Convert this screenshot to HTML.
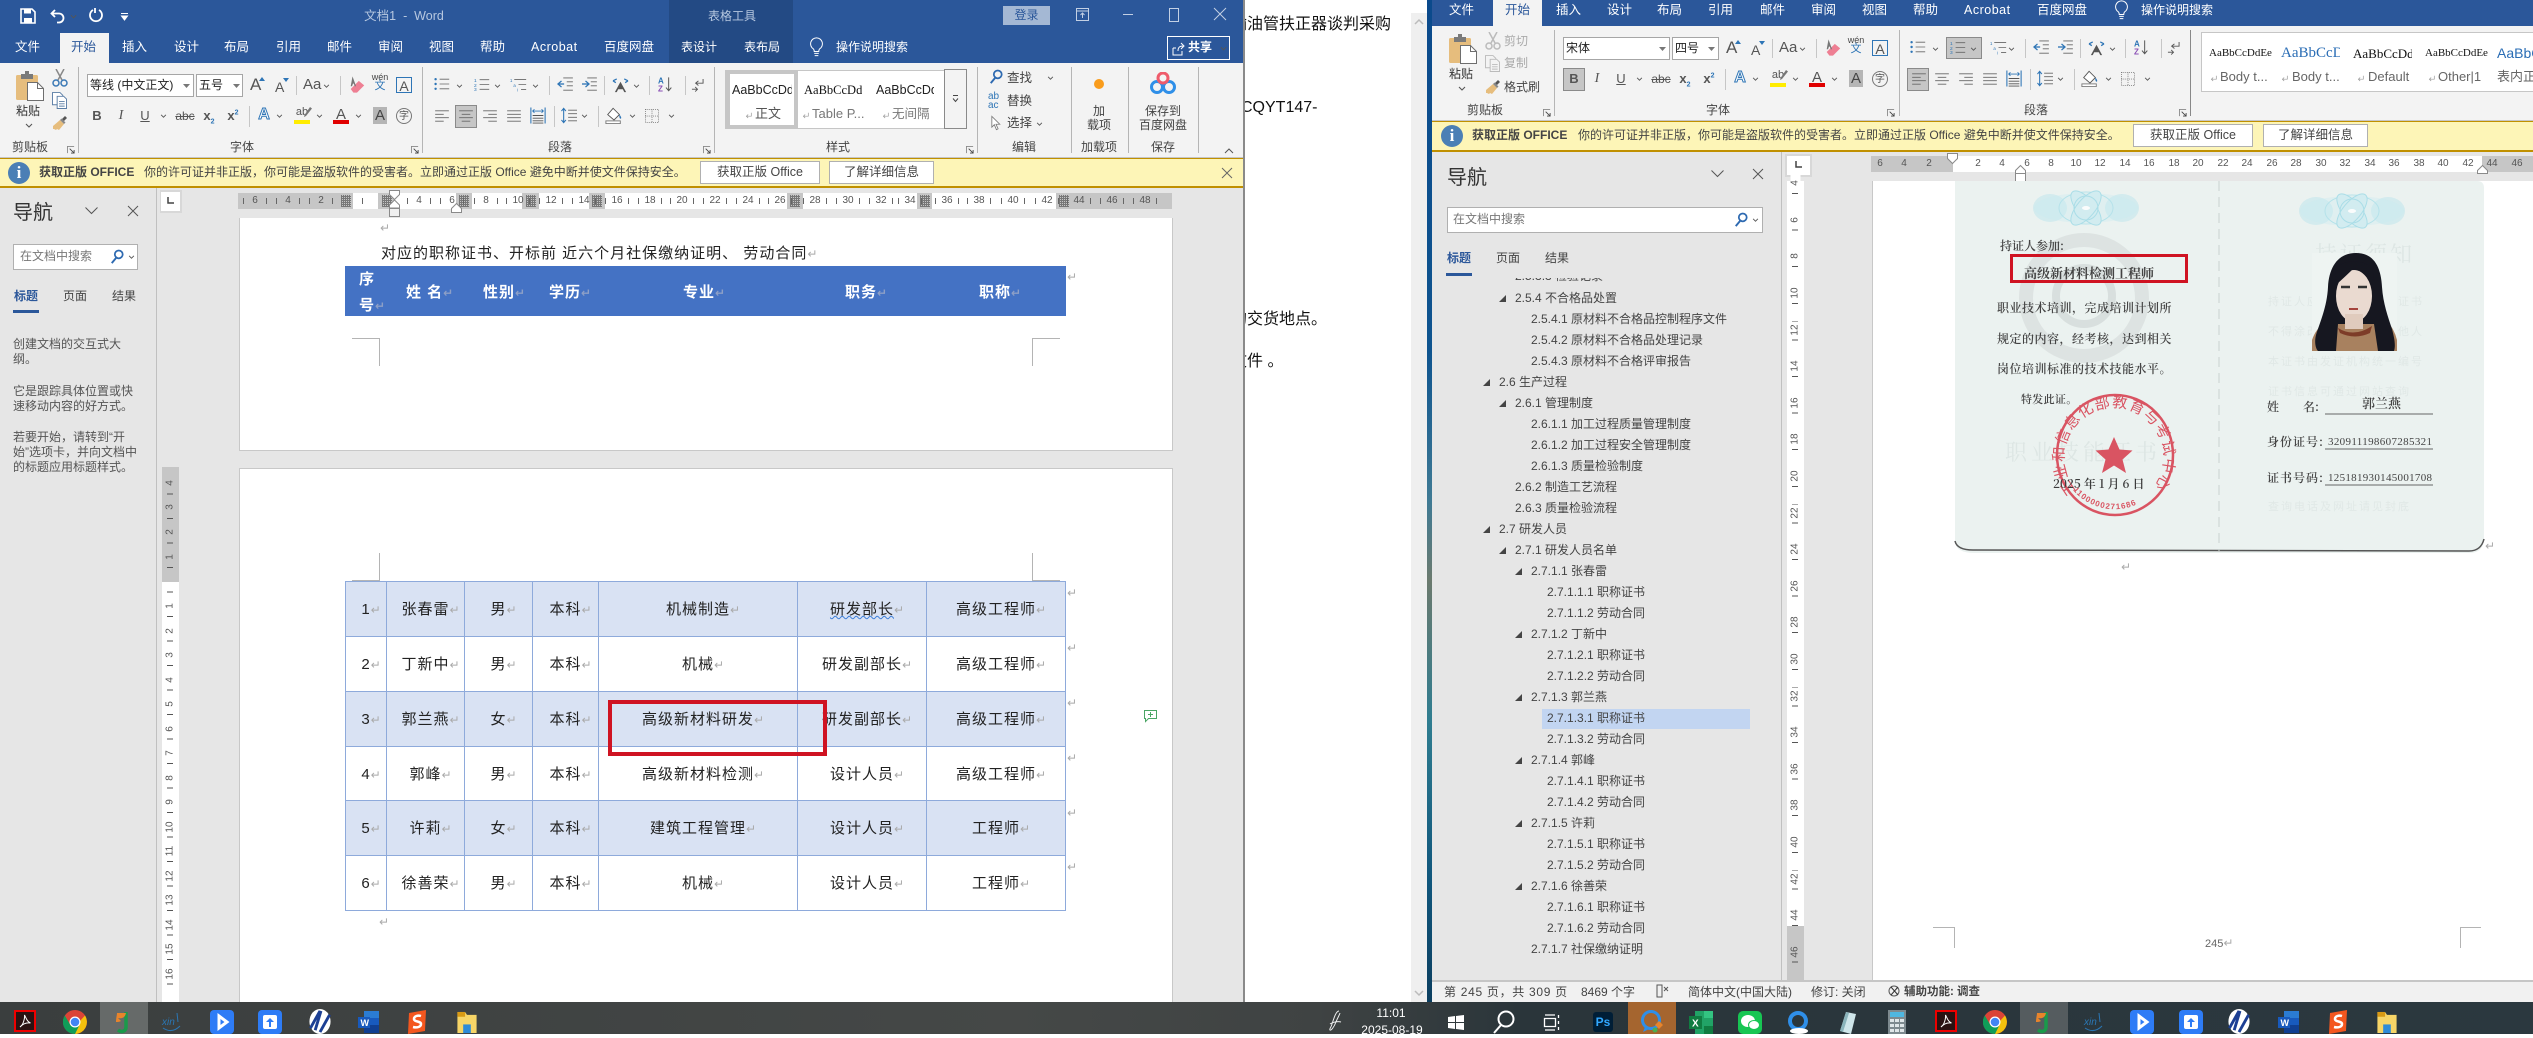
<!DOCTYPE html>
<html lang="zh"><head><meta charset="utf-8"><title>Word</title>
<style>
html,body{margin:0;padding:0}
body{position:relative;width:2533px;height:1034px;overflow:hidden;background:#fff;font-family:"Liberation Sans","Noto Sans CJK SC",sans-serif;font-size:12px;color:#444}
.a,.t,.u,.g,.tb,.bx{position:absolute}
.t{white-space:nowrap;line-height:16px}
.c{transform:translateX(-50%)}
.tb{color:#fff;white-space:nowrap;line-height:16px;font-size:12.5px}
.u{overflow:visible;display:block}
.lbl{color:#444;font-size:12px}
.sep{position:absolute;width:1px;background:#c6c6c6}
.sep2{position:absolute;width:1px;background:#b5b5b5;top:67px;height:86px}
.inp{position:absolute;background:#fff;border:1px solid #a6a6a6;box-sizing:border-box;color:#222;line-height:21px;padding-left:2px;font-size:12px}
.y{position:absolute;background:#fdf5b7;border-top:1px solid #c09000;border-bottom:2px solid #c09000;box-sizing:border-box}
.yb{position:absolute;background:#fff;border:1px solid #b0b0b0;box-sizing:border-box;color:#444;text-align:center;line-height:20px;font-size:12.5px}
.tri{position:absolute;width:0;height:0;border-style:solid;border-width:0 0 7px 7px;border-color:transparent transparent #444}
.rn{position:absolute;top:193px;width:24px;height:16px;line-height:16px;text-align:center;font-size:10px;color:#555;margin-left:-12px;background:linear-gradient(#666,#666) 0 50%/1px 6px no-repeat,linear-gradient(#666,#666) 100% 50%/1px 6px no-repeat}
.rr{position:absolute;top:156px;width:20px;height:16px;line-height:16px;text-align:center;font-size:10px;color:#555;margin-left:-10px}
.hatch{position:absolute;top:193px;height:16px;background:#c6c6c6}
.hatch:after{content:"";position:absolute;left:50%;top:2px;width:10px;height:12px;margin-left:-5px;background:repeating-linear-gradient(90deg,#777 0 1px,transparent 1px 2px),repeating-linear-gradient(0deg,#777 0 1px,transparent 1px 2px)}
.vn{position:absolute;width:17px;height:12px;line-height:12px;text-align:center;font-size:10px;color:#555;transform:rotate(-90deg)}
.mk{font-style:normal;color:#aaa;font-size:12px;font-family:"DejaVu Sans",sans-serif}
table.m{position:absolute;left:345px;top:581px;border-collapse:collapse;table-layout:fixed;width:720px;font-size:15px;letter-spacing:1px;color:#222}
table.m td{border:1px solid #8eaadb;text-align:center;padding:2px 0 0;white-space:nowrap;line-height:18px;overflow:hidden;box-sizing:border-box}
table.m tr.o td{background:#d9e2f3}
table.m .mk{display:inline-block;width:0;overflow:visible;letter-spacing:0}
.pm{position:absolute;font-size:12px;color:#aaa;font-family:"DejaVu Sans",sans-serif;line-height:14px}
.th{position:absolute;color:#fff;font-weight:bold;font-size:15px;line-height:18px;white-space:nowrap;letter-spacing:1px}
.crop{position:absolute;background:#b4b4b4}
.n{position:absolute;font-size:12px;color:#555;line-height:16px;white-space:nowrap}
.tr{position:absolute;font-size:12px;color:#444;line-height:16px;white-space:nowrap}
.tabb{position:absolute;font-size:13px;line-height:16px;color:#444;white-space:nowrap}
.st{position:absolute;font-size:12px;color:#444;line-height:16px;white-space:nowrap;top:984px}
.ti{position:absolute;overflow:visible}
</style></head><body>
<svg width="0" height="0" style="position:absolute"><defs>
<symbol id="chev" viewBox="0 0 8 5"><path d="M1 1l3 3 3-3" stroke="#555" fill="none" stroke-width="1.1"/></symbol>
<symbol id="launch" viewBox="0 0 9 9"><path d="M.5 8V.5H8" stroke="#888" fill="none"/><path d="M3 3l5 5M8 4.5V8H4.5" stroke="#444" fill="none"/></symbol>
<symbol id="paste" viewBox="0 0 28 30"><rect x="0" y="4" width="22" height="25" rx="1.5" fill="#e6bd7d"/><rect x="5" y="3" width="12" height="5" fill="#7a7a7a"/><rect x="9" y="0" width="4" height="4" fill="#7a7a7a"/><path d="M11.500 11.500h10l6 6v12h-16z" fill="#fff" stroke="#6e6e6e"/><path d="M21.500 11.500v6h6" fill="none" stroke="#6e6e6e"/></symbol>
<symbol id="sciss" viewBox="0 0 16 18"><path d="M4 0l6 11M12 0L6 11" stroke="#888" stroke-width="1.500" fill="none"/><circle cx="4" cy="14" r="3" fill="none" stroke="#3a78b5" stroke-width="1.500"/><circle cx="12" cy="14" r="3" fill="none" stroke="#3a78b5" stroke-width="1.500"/></symbol>
<symbol id="scissg" viewBox="0 0 16 18"><path d="M4 0l6 11M12 0L6 11" stroke="#bbb" stroke-width="1.500" fill="none"/><circle cx="4" cy="14" r="3" fill="none" stroke="#bbb" stroke-width="1.500"/><circle cx="12" cy="14" r="3" fill="none" stroke="#bbb" stroke-width="1.500"/></symbol>
<symbol id="copy" viewBox="0 0 16 18"><path d="M.5.5h8l3 3v10h-11z" fill="#fff" stroke="#5a7da5"/><path d="M5.500 4.500h7l3 3v10h-10z" fill="#fff" stroke="#5a7da5"/><path d="M7.500 10h6M7.500 12.500h6M7.500 15h6" stroke="#5a7da5"/></symbol>
<symbol id="copyg" viewBox="0 0 16 18"><path d="M.5.5h8l3 3v10h-11z" fill="#f3f3f3" stroke="#bbb"/><path d="M5.500 4.500h7l3 3v10h-10z" fill="#f3f3f3" stroke="#bbb"/><path d="M7.500 10h6M7.500 12.500h6M7.500 15h6" stroke="#bbb"/></symbol>
<symbol id="paint" viewBox="0 0 16 16"><path d="M1 11L8 5l4 4-5 6-2-1-1 1-2-1-1 0z" fill="#e6bd7d"/><path d="M8 5l4 4 1.500-1.500-4-4z" fill="#888"/><path d="M10 4l3-3 2 2-3 3z" fill="#555"/></symbol>
<symbol id="bul" viewBox="0 0 20 16"><circle cx="2" cy="2" r="1.500" fill="#2e75b6"/><circle cx="2" cy="8" r="1.500" fill="#2e75b6"/><circle cx="2" cy="14" r="1.500" fill="#2e75b6"/><path d="M7 2h12M7 8h12M7 14h12" stroke="#666"/></symbol>
<symbol id="num" viewBox="0 0 20 16"><text x="0" y="5" font-size="6" fill="#2e75b6" font-family="Liberation Sans">1</text><text x="0" y="11" font-size="6" fill="#2e75b6" font-family="Liberation Sans">2</text><text x="0" y="16" font-size="6" fill="#2e75b6" font-family="Liberation Sans">3</text><path d="M7 2h12M7 8h12M7 14h12" stroke="#666"/></symbol>
<symbol id="mul" viewBox="0 0 20 16"><text x="0" y="5" font-size="5" fill="#2e75b6" font-family="Liberation Sans">1</text><text x="4" y="11" font-size="5" fill="#2e75b6" font-family="Liberation Sans">a</text><text x="8" y="16" font-size="5" fill="#2e75b6" font-family="Liberation Sans">i</text><path d="M5 2h14M10 8h9M13 14h6" stroke="#666"/></symbol>
<symbol id="dec" viewBox="0 0 18 16"><path d="M7 1h11M11 5.500h7M11 10h7M7 15h11" stroke="#666"/><path d="M1 8h7" stroke="#2e75b6" stroke-width="1.500"/><path d="M5 4.500L1 8l4 3.500" fill="none" stroke="#2e75b6" stroke-width="1.500"/></symbol>
<symbol id="inc" viewBox="0 0 18 16"><path d="M7 1h11M11 5.500h7M11 10h7M7 15h11" stroke="#666"/><path d="M1 8h7" stroke="#2e75b6" stroke-width="1.500"/><path d="M5 4.500L9 8l-4 3.500" fill="none" stroke="#2e75b6" stroke-width="1.500"/></symbol>
<symbol id="xa" viewBox="0 0 18 16"><path d="M9 4l6 11h-2l-1.500-3h-5L5 15H3z" fill="#555"/><path d="M1 3l4-2M1 3l3 2M17 3l-4-2M17 3l-3 2" stroke="#2e75b6" fill="none" stroke-width="1.300"/></symbol>
<symbol id="sort" viewBox="0 0 18 18"><text x="0" y="8" font-size="9" font-weight="bold" fill="#2e75b6" font-family="Liberation Sans">A</text><text x="0" y="17" font-size="9" font-weight="bold" fill="#8a4fb5" font-family="Liberation Sans">Z</text><path d="M12 1v15M9 12.500l3 3.500 3-3.500" stroke="#555" fill="none" stroke-width="1.100"/></symbol>
<symbol id="pil" viewBox="0 0 14 16"><path d="M13 1v4.500H6M8 3L5 5.500 8 8" stroke="#555" fill="none"/><path d="M1 12h6" stroke="#555"/><path d="M4.500 9.500L7 12l-2.500 2.500" stroke="#555" fill="none"/></symbol>
<symbol id="al" viewBox="0 0 16 14"><path d="M0 1h16M0 5h10M0 9h16M0 13h10" stroke="#666"/></symbol>
<symbol id="ac" viewBox="0 0 16 14"><path d="M0 1h16M3 5h10M0 9h16M3 13h10" stroke="#666"/></symbol>
<symbol id="ar" viewBox="0 0 16 14"><path d="M0 1h16M6 5h10M0 9h16M6 13h10" stroke="#666"/></symbol>
<symbol id="aj" viewBox="0 0 16 14"><path d="M0 1h16M0 5h16M0 9h16M0 13h16" stroke="#666"/></symbol>
<symbol id="ad" viewBox="0 0 18 18"><path d="M1 0v18M17 0v18" stroke="#2e75b6" stroke-width="1.200"/><path d="M3 4h12M5 2l-2 2 2 2M13 2l2 2-2 2" stroke="#2e75b6" fill="none"/><path d="M3 9h12M3 12h12M3 15h12M3 17.500h12" stroke="#555"/></symbol>
<symbol id="ls" viewBox="0 0 18 18"><path d="M3 1v16M.5 4L3 1l2.500 3M.5 14L3 17l2.500-3" stroke="#2e75b6" fill="none" stroke-width="1.200"/><path d="M8 3h10M8 7h10M8 11h10M8 15h10" stroke="#666"/></symbol>
<symbol id="shade" viewBox="0 0 20 18"><path d="M9 1l7 7-6 6-7-6z" fill="#fff" stroke="#555"/><path d="M16 8c2 2 2.500 4 1.500 4.500s-2-2-1.500-4.500z" fill="#2e75b6"/><rect x="1" y="15" width="16" height="3" fill="#fff" stroke="#777"/></symbol>
<symbol id="bord" viewBox="0 0 16 16"><path d="M.5.5h15v15H.5zM8 .5v15M.5 8h15" fill="none" stroke="#777" stroke-dasharray="1 1.200"/></symbol>
<symbol id="erase" viewBox="0 0 20 20"><path d="M3 15L12 6l6 5-8 8H6z" fill="#ee7f93"/><path d="M2 1l4 11h-1.500l-1-3h-1L1.500 12H0z" fill="#777" transform="translate(3 0)"/></symbol>
<symbol id="find" viewBox="0 0 16 18"><circle cx="10" cy="6" r="4.500" fill="none" stroke="#2e6ab1" stroke-width="2"/><path d="M7 10l-5 6" stroke="#2e6ab1" stroke-width="2.200"/></symbol>
<symbol id="cur" viewBox="0 0 12 18"><path d="M1 1v13l3-3 2.500 6 2-1-2.500-5.500h4.500z" fill="#fff" stroke="#777"/></symbol>
<symbol id="bulb" viewBox="0 0 16 22"><path d="M8 1a6.500 6.500 0 0 0-3.500 12c.5.5 1 1.500 1 3h5c0-1.500.5-2.500 1-3A6.500 6.500 0 0 0 8 1z" fill="none" stroke="#fff" stroke-width="1.100"/><path d="M5.500 18h5M6 20.500h4" stroke="#fff" stroke-width="1.100"/></symbol>
<symbol id="du" viewBox="0 0 26 24"><circle cx="7" cy="15" r="5.500" fill="none" stroke="#2f8fe8" stroke-width="3"/><circle cx="19" cy="15" r="5.500" fill="none" stroke="#2f8fe8" stroke-width="3"/><circle cx="13" cy="6" r="5" fill="none" stroke="#ef5b6b" stroke-width="3"/><circle cx="13" cy="15" r="2" fill="#2f8fe8"/></symbol>
<symbol id="pmk" viewBox="0 0 10 10"><path d="M9 1v5H2M4.500 3.500L2 6l2.500 2.500" fill="none" stroke="#999"/></symbol>
<symbol id="ch" viewBox="0 0 24 24"><circle cx="12" cy="12" r="12" fill="#db4437"/><path d="M12 24A12 12 0 0 0 22 5.500L16 12z" fill="#f4c20d"/><path d="M1.800 5.500A12 12 0 0 0 12 24l4-8-8 0z" fill="#0f9d58"/><circle cx="12" cy="12" r="5.500" fill="#fff"/><circle cx="12" cy="12" r="4.300" fill="#4285f4"/></symbol>
<symbol id="acr" viewBox="0 0 22 22"><rect x="1" y="1" width="20" height="20" fill="#2a1212" stroke="#e00" stroke-width="2"/><path d="M6 17c3-2 5-8 4.500-12 2 4 3 7 6 8-3-.5-7 0-10.500 4z" fill="none" stroke="#fff"/></symbol>
<symbol id="jj" viewBox="0 0 22 24"><path d="M13 2v15c0 4-4 6-8 3" fill="none" stroke="#1a9a4a" stroke-width="3.500"/><path d="M4 3h9c-1 4-3 6-8 5l3 3c-2 1-3 1-5 1 0-4 1-7 1-9z" fill="#e8842b"/></symbol>
<symbol id="wd" viewBox="0 0 24 24"><path d="M7 1h15v22H7z" fill="#2b7cd3"/><path d="M7 8h15v7H7z" fill="#185abd"/><path d="M7 15h15v8H7z" fill="#103f91"/><rect x="1" y="7" width="12" height="11" fill="#185abd"/><text x="3.500" y="16" font-size="9" font-weight="bold" fill="#fff" font-family="Liberation Sans">W</text></symbol>
<symbol id="ss" viewBox="0 0 22 24"><path d="M3 3L20 0l-1 21-17 3z" fill="#f4571f"/><path d="M15 6c-3-1-7 0-7 3s7 2 7 5-4 4-8 3" fill="none" stroke="#fff" stroke-width="2.500"/></symbol>
<symbol id="fold" viewBox="0 0 22 24"><path d="M1 1h8l2 3h10v19H1z" fill="#f7d567"/><path d="M1 1h8v5H1z" fill="#d99a14"/><path d="M7 14h8v9H7z" fill="#2e8bd8"/></symbol>
<symbol id="bd" viewBox="0 0 24 24"><rect width="24" height="24" rx="4" fill="#2e7cf6"/><path d="M9 6l8 6-8 6z" fill="none" stroke="#fff" stroke-width="3"/></symbol>
<symbol id="bu" viewBox="0 0 24 24"><rect width="24" height="24" rx="4" fill="#2e7cf6"/><rect x="5" y="5" width="14" height="14" rx="2" fill="#fff"/><path d="M12 8l-4 4h3v5h2v-5h3z" fill="#2e7cf6"/></symbol>
<symbol id="ni" viewBox="0 0 24 26"><ellipse cx="12" cy="13" rx="11" ry="13" fill="#fff"/><path d="M2 20L12 2M7 22l6-20M22 6L12 24" stroke="#1c3f94" stroke-width="3" fill="none"/></symbol>
<symbol id="xin" viewBox="0 0 24 24"><text x="2" y="15" font-size="10" fill="#2a77b5" font-family="Liberation Sans" font-style="italic">xin</text><path d="M3 18q9 6 17-2M17 3l1 9" fill="none" stroke="#2a77b5"/></symbol>
<g id="ros" opacity=".8"><ellipse rx="52" ry="15" fill="#d9eff1" opacity=".8"/><ellipse cx="-36" rx="17" ry="14" fill="#bfe6ec" opacity=".7"/><ellipse cx="36" rx="17" ry="14" fill="#bfe6ec" opacity=".7"/><ellipse rx="27" ry="16" fill="none" stroke="#a8dfe9"/><ellipse rx="21" ry="9" transform="rotate(50)" fill="#cdebf0" stroke="#9ad9e6"/><ellipse rx="21" ry="9" transform="rotate(-50)" fill="#cdebf0" stroke="#9ad9e6"/><ellipse rx="12" ry="12" fill="none" stroke="#9ad9e6"/><ellipse rx="4" ry="2" fill="#fff"/></g>
</defs></svg>

<!-- LEFT WINDOW -->
<div class="a" style="left:0;top:0;width:1243px;height:63px;background:#2b579a"></div>
<div class="a" style="left:669px;top:0;width:124px;height:63px;background:#234a84"></div>
<svg class="u" style="left:20px;top:8px" width="16" height="16" viewBox="0 0 16 16"><path d="M1 1h11l3 3v11H1z" fill="none" stroke="#fff" stroke-width="1.600"/><path d="M4 1.500h7v4H4zM4 10h8v5H4z" fill="#fff"/></svg>
<svg class="u" style="left:50px;top:8px" width="16" height="16" viewBox="0 0 16 16"><path d="M5 2L1.500 5.500 5 9M2 5.500h7a4.500 4.500 0 0 1 0 9H7" fill="none" stroke="#fff" stroke-width="1.800"/></svg>
<svg class="u" style="left:70px;top:14px" width="7" height="5"><use href="#chev"/></svg>
<svg class="u" style="left:88px;top:7px" width="16" height="16" viewBox="0 0 16 16"><path d="M5 3a6 6 0 1 0 6 0M7 1v5" fill="none" stroke="#fff" stroke-width="1.800"/></svg>
<svg class="u" style="left:120px;top:13px" width="9" height="8" viewBox="0 0 9 8"><path d="M1 .5h7M1.500 3h6L4.500 7z" stroke="#fff" fill="#fff"/></svg>
<span class="t c" style="left:404px;top:8px;color:#b7c8e0;font-size:12.500px">文档1 &nbsp;-&nbsp; Word</span>
<span class="t c" style="left:732px;top:8px;color:#b7c8e0;font-size:12px">表格工具</span>
<div class="a" style="left:1003px;top:6px;width:47px;height:19px;background:#a4b8d4;color:#2b579a;text-align:center;line-height:19px;font-size:12px">登录</div>
<svg class="u" style="left:1076px;top:8px" width="13" height="13" viewBox="0 0 13 13"><path d="M.5.5h12v12H.5zM.5 3h12M6.500 10V5M4.500 7l2-2 2 2" fill="none" stroke="#c3d0e4"/></svg>
<div class="a" style="left:1123px;top:14px;width:10px;height:1px;background:#c3d0e4"></div>
<div class="a" style="left:1169px;top:8px;width:8px;height:12px;border:1px solid #c3d0e4"></div>
<svg class="u" style="left:1214px;top:8px" width="12" height="12"><path d="M0 0l12 12M12 0L0 12" stroke="#c3d0e4"/></svg>
<span class="tb" style="left:15px;top:39px">文件</span>
<div class="a" style="left:60px;top:33px;width:49px;height:30px;background:#f3f3f3"></div>
<span class="tb" style="left:71px;top:39px;color:#2b579a">开始</span>
<span class="tb" style="left:122px;top:39px">插入</span><span class="tb" style="left:174px;top:39px">设计</span><span class="tb" style="left:224px;top:39px">布局</span><span class="tb" style="left:276px;top:39px">引用</span><span class="tb" style="left:327px;top:39px">邮件</span><span class="tb" style="left:378px;top:39px">审阅</span><span class="tb" style="left:429px;top:39px">视图</span><span class="tb" style="left:480px;top:39px">帮助</span><span class="tb" style="left:531px;top:39px;letter-spacing:.5px">Acrobat</span><span class="tb" style="left:604px;top:39px;font-size:12.500px">百度网盘</span><span class="tb" style="left:681px;top:39px;font-size:12px">表设计</span><span class="tb" style="left:744px;top:39px;font-size:12px">表布局</span>
<svg class="u" style="left:809px;top:37px" width="15" height="20"><use href="#bulb"/></svg>
<span class="tb" style="left:836px;top:39px;font-size:12px">操作说明搜索</span>
<div class="a" style="left:1167px;top:36px;width:63px;height:24px;border:1px solid #fff;box-sizing:border-box"></div>
<svg class="u" style="left:1172px;top:42px" width="14" height="14" viewBox="0 0 14 14"><path d="M1 6v7h9V9M1 6h3M6 9c0-4 2-5 5-5M9 1l3 3-3 3" fill="none" stroke="#fff"/></svg>
<span class="tb" style="left:1188px;top:39px;font-weight:bold;font-size:12px">共享</span>
<svg class="u" style="left:1220px;top:46px" width="7" height="5"><use href="#chev"/></svg>

<!-- left ribbon -->
<div class="a" style="left:0;top:63px;width:1243px;height:95px;background:#f3f3f3"></div>
<div class="a" style="left:0;top:157px;width:1243px;height:1px;background:#c6c6c6"></div>
<svg class="u" style="left:16px;top:71px" width="28" height="30"><use href="#paste"/></svg>
<span class="t" style="left:16px;top:103px;color:#333">粘贴</span>
<svg class="u" style="left:25px;top:123px" width="8" height="5"><use href="#chev"/></svg>
<svg class="u" style="left:52px;top:69px" width="16" height="18"><use href="#sciss"/></svg>
<svg class="u" style="left:52px;top:92px" width="15" height="17"><use href="#copy"/></svg>
<svg class="u" style="left:52px;top:115px" width="16" height="16"><use href="#paint"/></svg>
<span class="t lbl" style="left:12px;top:139px">剪贴板</span>
<svg class="u" style="left:67px;top:146px" width="8" height="8"><use href="#launch"/></svg>
<div class="sep2" style="left:78px"></div>
<div class="inp" style="left:87px;top:74px;width:107px;height:23px">等线 (中文正文)</div>
<div class="inp" style="left:196px;top:74px;width:47px;height:23px">五号</div>
<svg class="u" style="left:183px;top:84px" width="7" height="4" viewBox="0 0 7 4"><path d="M0 0h7L3.500 4z" fill="#777"/></svg>
<svg class="u" style="left:233px;top:84px" width="7" height="4" viewBox="0 0 7 4"><path d="M0 0h7L3.500 4z" fill="#777"/></svg>
<span class="t lbl" style="left:230px;top:139px">字体</span>
<svg class="u" style="left:411px;top:146px" width="8" height="8"><use href="#launch"/></svg>
<div class="sep2" style="left:422px"></div>
<span class="t lbl" style="left:548px;top:139px">段落</span>
<svg class="u" style="left:703px;top:146px" width="8" height="8"><use href="#launch"/></svg>
<div class="sep2" style="left:714px"></div>

<!-- font + para group (left) -->
<div class="a" style="left:455px;top:105px;width:22px;height:23px;background:#c6c6c6;border:1px solid #8a8a8a;box-sizing:border-box"></div>
<div class="a" id="grpA" style="left:0;top:0">
<span class="t" style="left:250px;top:77px;font-size:17px;color:#555">A</span><svg class="u" style="left:259px;top:77px" width="6" height="4" viewBox="0 0 6 4"><path d="M0 4h6L3 0z" fill="#2e75b6"/></svg>
<span class="t" style="left:275px;top:79px;font-size:14px;color:#555">A</span><svg class="u" style="left:283px;top:78px" width="6" height="4" viewBox="0 0 6 4"><path d="M0 0h6L3 4z" fill="#2e75b6"/></svg>
<div class="sep" style="left:296px;top:76px;height:19px"></div>
<span class="t" style="left:303px;top:77px;font-size:15px;color:#555">Aa</span><svg class="u" style="left:323px;top:84px" width="7" height="4"><use href="#chev"/></svg>
<div class="sep" style="left:340px;top:76px;height:19px"></div>
<svg class="u" style="left:348px;top:75px" width="18" height="19"><use href="#erase"/></svg>
<span class="t c" style="left:380px;top:72px;font-size:9px;color:#444;line-height:10px">wén</span><span class="t c" style="left:380px;top:80px;font-size:11px;color:#2e75b6;line-height:12px">文</span>
<div class="a" style="left:396px;top:77px;width:16px;height:16px;border:1px solid #2e75b6;text-align:center;line-height:16px;font-size:14px;color:#555;box-sizing:border-box">A</div>
<span class="t c" style="left:97px;top:108px;font-weight:bold;font-size:13px;color:#555">B</span>
<span class="t c" style="left:121px;top:108px;font-style:italic;font-family:'Liberation Serif';font-size:14px;color:#555">I</span>
<span class="t c" style="left:145px;top:108px;text-decoration:underline;font-size:13px;color:#555">U</span><svg class="u" style="left:160px;top:114px" width="7" height="4"><use href="#chev"/></svg>
<span class="t c" style="left:185px;top:108px;text-decoration:line-through;font-size:12px;color:#555">abc</span>
<span class="t c" style="left:209px;top:108px;font-size:13px;color:#555;font-weight:bold">x<sub style="font-size:7px;color:#2e75b6">2</sub></span>
<span class="t c" style="left:233px;top:108px;font-size:13px;color:#555;font-weight:bold">x<sup style="font-size:7px;color:#2e75b6;line-height:0">2</sup></span>
<div class="sep" style="left:249px;top:106px;height:21px"></div>
<span class="t c" style="left:264px;top:107px;font-size:16px;color:#fff;font-weight:bold;-webkit-text-stroke:1px #2e75b6">A</span><svg class="u" style="left:276px;top:114px" width="7" height="4"><use href="#chev"/></svg>
<span class="t c" style="left:302px;top:104px;font-size:11px;color:#555">ab</span><svg class="u" style="left:304px;top:107px" width="8" height="10" viewBox="0 0 8 10"><path d="M6 0l2 1.500L2 9 0 10l.5-2z" fill="#777"/></svg><div class="a" style="left:294px;top:120px;width:16px;height:4px;background:#ffec00"></div><svg class="u" style="left:316px;top:114px" width="7" height="4"><use href="#chev"/></svg>
<span class="t c" style="left:341px;top:107px;font-size:15px;color:#555">A</span><div class="a" style="left:333px;top:120px;width:16px;height:4px;background:#e00000"></div><svg class="u" style="left:355px;top:114px" width="7" height="4"><use href="#chev"/></svg>
<div class="a" style="left:373px;top:107px;width:14px;height:17px;background:#b5b5b5;text-align:center;line-height:17px;font-size:15px;color:#444">A</div>
<div class="a" style="left:396px;top:108px;width:16px;height:16px;border:1px solid #777;border-radius:50%;text-align:center;line-height:15px;font-size:10px;color:#555;box-sizing:border-box">字</div>
<svg class="u" style="left:434px;top:77px" width="16" height="14"><use href="#bul"/></svg><svg class="u" style="left:456px;top:84px" width="7" height="4"><use href="#chev"/></svg>
<svg class="u" style="left:474px;top:77px" width="16" height="15"><use href="#num"/></svg><svg class="u" style="left:494px;top:84px" width="7" height="4"><use href="#chev"/></svg>
<svg class="u" style="left:510px;top:77px" width="17" height="15"><use href="#mul"/></svg><svg class="u" style="left:532px;top:84px" width="7" height="4"><use href="#chev"/></svg>
<div class="sep" style="left:549px;top:76px;height:19px"></div>
<svg class="u" style="left:557px;top:77px" width="16" height="14"><use href="#dec"/></svg>
<svg class="u" style="left:581px;top:77px" width="16" height="14"><use href="#inc"/></svg>
<div class="sep" style="left:604px;top:76px;height:19px"></div>
<svg class="u" style="left:612px;top:78px" width="17" height="15"><use href="#xa"/></svg><svg class="u" style="left:633px;top:84px" width="7" height="4"><use href="#chev"/></svg>
<div class="sep" style="left:649px;top:76px;height:19px"></div>
<svg class="u" style="left:658px;top:76px" width="16" height="17"><use href="#sort"/></svg>
<div class="sep" style="left:685px;top:76px;height:19px"></div>
<svg class="u" style="left:691px;top:78px" width="13" height="15"><use href="#pil"/></svg>
<svg class="u" style="left:435px;top:110px" width="14" height="12"><use href="#al"/></svg>
<svg class="u" style="left:459px;top:110px" width="14" height="12"><use href="#ac"/></svg>
<svg class="u" style="left:483px;top:110px" width="14" height="12"><use href="#ar"/></svg>
<svg class="u" style="left:507px;top:110px" width="14" height="12"><use href="#aj"/></svg>
<svg class="u" style="left:530px;top:107px" width="16" height="17"><use href="#ad"/></svg>
<div class="sep" style="left:554px;top:106px;height:21px"></div>
<svg class="u" style="left:561px;top:107px" width="16" height="17"><use href="#ls"/></svg><svg class="u" style="left:581px;top:114px" width="7" height="4"><use href="#chev"/></svg>
<div class="sep" style="left:598px;top:106px;height:21px"></div>
<svg class="u" style="left:605px;top:107px" width="18" height="17"><use href="#shade"/></svg><svg class="u" style="left:629px;top:114px" width="7" height="4"><use href="#chev"/></svg>
<svg class="u" style="left:645px;top:109px" width="14" height="14"><use href="#bord"/></svg><svg class="u" style="left:668px;top:114px" width="7" height="4"><use href="#chev"/></svg>
</div>

<!-- styles left -->
<div class="a" style="left:725px;top:70px;width:242px;height:59px;background:#fff;border:1px solid #c6c6c6;box-sizing:border-box"></div>
<div class="a" style="left:726px;top:70px;width:72px;height:59px;background:#fff;border:4px solid #c6c6c6;box-sizing:border-box"></div>
<div class="a" style="left:944px;top:69px;width:23px;height:60px;border:1px solid #8a8a8a;box-sizing:border-box;background:#f3f3f3"></div>
<svg class="u" style="left:951px;top:95px" width="9" height="8" viewBox="0 0 9 8"><path d="M2 .5h5" stroke="#444"/><path d="M2 3.500l2.500 3 2.500-3" fill="none" stroke="#444"/></svg>
<div class="a" style="left:732px;top:82px;width:60px;height:16px;overflow:hidden;color:#222;font-size:12.500px;line-height:16px;white-space:nowrap">AaBbCcDdEe</div>
<div class="a" style="left:804px;top:82px;width:58px;height:16px;overflow:hidden;color:#111;font-size:12.500px;line-height:16px;white-space:nowrap;font-family:'Liberation Serif'">AaBbCcDdEe</div>
<div class="a" style="left:876px;top:82px;width:58px;height:16px;overflow:hidden;color:#222;font-size:12.500px;line-height:16px;white-space:nowrap">AaBbCcDdEe</div>
<svg class="u" style="left:745px;top:112px" width="7" height="7"><use href="#pmk"/></svg><span class="t" style="left:755px;top:106px;color:#555;font-size:13px">正文</span>
<svg class="u" style="left:802px;top:112px" width="7" height="7"><use href="#pmk"/></svg><span class="t" style="left:812px;top:106px;color:#777;font-size:13px">Table P...</span>
<svg class="u" style="left:882px;top:112px" width="7" height="7"><use href="#pmk"/></svg><span class="t" style="left:892px;top:106px;color:#777;font-size:12.500px">无间隔</span>
<span class="t lbl" style="left:826px;top:139px">样式</span>
<svg class="u" style="left:966px;top:146px" width="8" height="8"><use href="#launch"/></svg>
<div class="sep2" style="left:977px"></div>
<svg class="u" style="left:989px;top:69px" width="14" height="16"><use href="#find"/></svg><span class="t" style="left:1007px;top:70px;font-size:12.500px">查找</span><svg class="u" style="left:1047px;top:76px" width="7" height="4"><use href="#chev"/></svg>
<span class="t" style="left:988px;top:92px;font-size:10px;line-height:9px;color:#2e75b6;white-space:normal;width:18px">ab<br>ac</span><span class="t" style="left:1007px;top:93px;font-size:12.500px">替换</span>
<svg class="u" style="left:991px;top:115px" width="10" height="16"><use href="#cur"/></svg><span class="t" style="left:1007px;top:115px;font-size:12.500px">选择</span><svg class="u" style="left:1036px;top:122px" width="7" height="4"><use href="#chev"/></svg>
<span class="t lbl" style="left:1012px;top:139px">编辑</span>
<div class="sep2" style="left:1071px"></div>
<div class="a" style="left:1094px;top:79px;width:10px;height:10px;border-radius:50%;background:#f99c1c"></div>
<span class="t c" style="left:1099px;top:103px">加</span><span class="t c" style="left:1099px;top:117px">载项</span>
<span class="t lbl c" style="left:1099px;top:139px">加载项</span>
<div class="sep2" style="left:1128px"></div>
<svg class="u" style="left:1150px;top:72px" width="26" height="24"><use href="#du"/></svg>
<span class="t c" style="left:1163px;top:103px">保存到</span><span class="t c" style="left:1163px;top:117px">百度网盘</span>
<span class="t lbl c" style="left:1163px;top:139px">保存</span>
<div class="sep2" style="left:1198px"></div>
<svg class="u" style="left:1224px;top:148px" width="10" height="6"><path d="M1 5l4-4 4 4" fill="none" stroke="#555"/></svg>

<!-- yellow left -->
<div class="y" style="left:0;top:158px;width:1243px;height:30px"></div>
<div class="a" style="left:8px;top:162px;width:22px;height:22px;border-radius:50%;background:#4b7fb5;color:#fff;text-align:center;line-height:22px;font-weight:bold;font-family:'Liberation Serif';font-size:17px">i</div>
<span class="t" style="left:39px;top:164px;font-weight:bold;color:#444;font-size:12px">获取正版 OFFICE</span>
<span class="t" style="left:144px;top:164px;color:#444;font-size:12px">你的许可证并非正版，你可能是盗版软件的受害者。立即通过正版 Office 避免中断并使文件保持安全。</span>
<div class="yb" style="left:700px;top:161px;width:120px;height:23px">获取正版 Office</div>
<div class="yb" style="left:829px;top:161px;width:105px;height:23px">了解详细信息</div>
<svg class="u" style="left:1222px;top:168px" width="10" height="10"><path d="M0 0l10 10M10 0L0 10" stroke="#666"/></svg>

<!-- left body -->
<div class="a" style="left:0;top:188px;width:1243px;height:814px;background:#e6e6e6"></div>
<div class="a" style="left:156px;top:188px;width:1px;height:814px;background:#c0c0c0"></div>
<span class="t" style="left:13px;top:201px;font-size:20px;line-height:24px;color:#333">导航</span>
<svg class="u" style="left:85px;top:207px" width="13" height="8"><path d="M.5.500l6 6 6-6" fill="none" stroke="#555"/></svg>
<svg class="u" style="left:128px;top:206px" width="10" height="10"><path d="M0 0l10 10M10 0L0 10" stroke="#555"/></svg>
<div class="a" style="left:13px;top:244px;width:125px;height:26px;background:#fff;border:1px solid #b0b0b0;box-sizing:border-box"></div>
<span class="n" style="left:20px;top:248px;color:#777">在文档中搜索</span>
<svg class="u" style="left:110px;top:249px" width="14" height="16"><use href="#find"/></svg>
<svg class="u" style="left:128px;top:255px" width="7" height="4"><use href="#chev"/></svg>
<span class="tabb" style="left:14px;top:288px;color:#2b579a;font-weight:bold;font-size:12px">标题</span>
<span class="tabb" style="left:63px;top:288px;font-size:12px">页面</span>
<span class="tabb" style="left:112px;top:288px;font-size:12px">结果</span>
<div class="a" style="left:13px;top:310px;width:26px;height:3px;background:#2b579a"></div>
<span class="n" style="left:13px;top:336px">创建文档的交互式大</span>
<span class="n" style="left:13px;top:351px">纲。</span>
<span class="n" style="left:13px;top:383px">它是跟踪具体位置或快</span>
<span class="n" style="left:13px;top:398px">速移动内容的好方式。</span>
<span class="n" style="left:13px;top:429px">若要开始，请转到“开</span>
<span class="n" style="left:13px;top:444px">始”选项卡，并向文档中</span>
<span class="n" style="left:13px;top:459px">的标题应用标题样式。</span>

<!-- left ruler -->
<div class="a" style="left:160px;top:190px;width:22px;height:23px;background:#d8d8d8"></div>
<div class="a" style="left:161px;top:192px;width:19px;height:19px;background:#fff"></div>
<svg class="u" style="left:167px;top:197px" width="7" height="7"><path d="M1 0v6h6" fill="none" stroke="#444" stroke-width="1.500"/></svg>
<div class="a" style="left:238px;top:193px;width:934px;height:16px;background:#fff"></div>
<div class="a" style="left:238px;top:193px;width:115px;height:16px;background:#c6c6c6"></div>
<div class="a" style="left:1056px;top:193px;width:116px;height:16px;background:#c6c6c6"></div>
<div class="hatch" style="left:338px;width:15px"></div>
<div class="hatch" style="left:378px;width:17px"></div>
<div class="hatch" style="left:456px;width:16px"></div>
<div class="hatch" style="left:522px;width:17px"></div>
<div class="hatch" style="left:589px;width:16px"></div>
<div class="hatch" style="left:787px;width:16px"></div>
<div class="hatch" style="left:917px;width:15px"></div>
<div class="hatch" style="left:1056px;width:15px"></div>
<span class="rn" style="left:255px">6</span><span class="rn" style="left:288px">4</span><span class="rn" style="left:321px">2</span><span class="a" style="left:362px;top:198px;width:1px;height:6px;background:#666"></span><span class="rn" style="left:419px">4</span><span class="rn" style="left:452px">6</span><span class="rn" style="left:486px">8</span><span class="rn" style="left:518px">10</span><span class="rn" style="left:551px">12</span><span class="rn" style="left:584px">14</span><span class="rn" style="left:617px">16</span><span class="rn" style="left:650px">18</span><span class="rn" style="left:682px">20</span><span class="rn" style="left:715px">22</span><span class="rn" style="left:748px">24</span><span class="rn" style="left:780px">26</span><span class="rn" style="left:815px">28</span><span class="rn" style="left:848px">30</span><span class="rn" style="left:881px">32</span><span class="rn" style="left:910px">34</span><span class="rn" style="left:947px">36</span><span class="rn" style="left:979px">38</span><span class="rn" style="left:1013px">40</span><span class="rn" style="left:1047px">42</span><span class="rn" style="left:1079px">44</span><span class="rn" style="left:1112px">46</span><span class="rn" style="left:1145px">48</span>
<svg class="u" style="left:389px;top:190px" width="12" height="28" viewBox="0 0 12 28"><path d="M.5.500h10v4l-5 5-5-5zM5.500 10l5 5v3h-10v-3z" fill="#fff" stroke="#8a8a8a"/><path d="M.5 18.500h10v8h-10z" fill="#f0f0f0" stroke="#8a8a8a"/></svg>
<svg class="u" style="left:451px;top:203px" width="11" height="10"><path d="M5.500.5l5 5v4h-10v-4z" fill="#fff" stroke="#8a8a8a"/></svg>

<!-- vertical ruler left -->
<div class="a" style="left:162px;top:467px;width:17px;height:115px;background:#c6c6c6"></div>
<div class="a" style="left:162px;top:582px;width:17px;height:420px;background:#fff"></div>
<div class="a" style="left:167px;top:470px;width:6px;height:532px;background:repeating-linear-gradient(to bottom,transparent 0,transparent 23.500px,#555 23.500px,#555 24.500px)"></div>
<span class="vn" style="left:162px;top:477px">4</span><span class="vn" style="left:162px;top:501px">3</span><span class="vn" style="left:162px;top:526px">2</span><span class="vn" style="left:162px;top:551px">1</span><span class="vn" style="left:162px;top:600px">1</span><span class="vn" style="left:162px;top:625px">2</span><span class="vn" style="left:162px;top:649px">3</span><span class="vn" style="left:162px;top:674px">4</span><span class="vn" style="left:162px;top:698px">5</span><span class="vn" style="left:162px;top:723px">6</span><span class="vn" style="left:162px;top:747px">7</span><span class="vn" style="left:162px;top:772px">8</span><span class="vn" style="left:162px;top:796px">9</span><span class="vn" style="left:162px;top:821px">10</span><span class="vn" style="left:162px;top:845px">11</span><span class="vn" style="left:162px;top:870px">12</span><span class="vn" style="left:162px;top:894px">13</span><span class="vn" style="left:162px;top:919px">14</span><span class="vn" style="left:162px;top:943px">15</span><span class="vn" style="left:162px;top:968px">16</span>

<!-- pages -->
<div class="a" style="left:239px;top:218px;width:934px;height:233px;background:#fff;border:1px solid #c8c8c8;border-top:0;box-sizing:border-box"></div>
<div class="a" style="left:239px;top:468px;width:934px;height:534px;background:#fff;border:1px solid #c8c8c8;border-bottom:0;box-sizing:border-box"></div>
<span class="pm" style="left:380px;top:221px">↵</span>
<span class="t" style="left:381px;top:245px;font-size:15px;line-height:18px;letter-spacing:1px;color:#222">对应的职称证书、开标前 近六个月社保缴纳证明、 劳动合同<i class="mk">↵</i></span>
<div class="a" style="left:345px;top:266px;width:721px;height:50px;background:#4472c4"></div>
<span class="th" style="left:359px;top:271px">序</span><span class="th" style="left:359px;top:297px">号<i class="mk" style="color:#8d9fc6">↵</i></span>
<span class="th" style="left:406px;top:284px">姓 名<i class="mk" style="color:#8d9fc6">↵</i></span>
<span class="th" style="left:483px;top:284px">性别<i class="mk" style="color:#8d9fc6">↵</i></span>
<span class="th" style="left:549px;top:284px">学历<i class="mk" style="color:#8d9fc6">↵</i></span>
<span class="th" style="left:683px;top:284px">专业<i class="mk" style="color:#8d9fc6">↵</i></span>
<span class="th" style="left:845px;top:284px">职务<i class="mk" style="color:#8d9fc6">↵</i></span>
<span class="th" style="left:979px;top:284px">职称<i class="mk" style="color:#8d9fc6">↵</i></span>
<span class="pm" style="left:1067px;top:270px">↵</span>
<div class="crop" style="left:352px;top:338px;width:27px;height:1px"></div><div class="crop" style="left:379px;top:338px;width:1px;height:28px"></div>
<div class="crop" style="left:1032px;top:338px;width:28px;height:1px"></div><div class="crop" style="left:1032px;top:338px;width:1px;height:28px"></div>
<div class="crop" style="left:379px;top:553px;width:1px;height:27px"></div><div class="crop" style="left:352px;top:580px;width:28px;height:1px"></div>
<div class="crop" style="left:1032px;top:553px;width:1px;height:27px"></div><div class="crop" style="left:1032px;top:580px;width:28px;height:1px"></div>

<table class="m"><colgroup><col style="width:41px"><col style="width:78px"><col style="width:68px"><col style="width:66px"><col style="width:199px"><col style="width:129px"><col style="width:139px"></colgroup>
<tr class="o" style="height:55px"><td>1<i class="mk">↵</i></td><td>张春雷<i class="mk">↵</i></td><td>男<i class="mk">↵</i></td><td>本科<i class="mk">↵</i></td><td>机械制造<i class="mk">↵</i></td><td><span style="text-decoration:underline wavy #3b7dd8 1px">研发部长</span><i class="mk">↵</i></td><td>高级工程师<i class="mk">↵</i></td></tr>
<tr style="height:55px"><td>2<i class="mk">↵</i></td><td>丁新中<i class="mk">↵</i></td><td>男<i class="mk">↵</i></td><td>本科<i class="mk">↵</i></td><td>机械<i class="mk">↵</i></td><td>研发副部长<i class="mk">↵</i></td><td>高级工程师<i class="mk">↵</i></td></tr>
<tr class="o" style="height:55px"><td>3<i class="mk">↵</i></td><td>郭兰燕<i class="mk">↵</i></td><td>女<i class="mk">↵</i></td><td>本科<i class="mk">↵</i></td><td>高级新材料研发<i class="mk">↵</i></td><td>研发副部长<i class="mk">↵</i></td><td>高级工程师<i class="mk">↵</i></td></tr>
<tr style="height:54px"><td>4<i class="mk">↵</i></td><td>郭峰<i class="mk">↵</i></td><td>男<i class="mk">↵</i></td><td>本科<i class="mk">↵</i></td><td>高级新材料检测<i class="mk">↵</i></td><td>设计人员<i class="mk">↵</i></td><td>高级工程师<i class="mk">↵</i></td></tr>
<tr class="o" style="height:55px"><td>5<i class="mk">↵</i></td><td>许莉<i class="mk">↵</i></td><td>女<i class="mk">↵</i></td><td>本科<i class="mk">↵</i></td><td>建筑工程管理<i class="mk">↵</i></td><td>设计人员<i class="mk">↵</i></td><td>工程师<i class="mk">↵</i></td></tr>
<tr style="height:55px"><td>6<i class="mk">↵</i></td><td>徐善荣<i class="mk">↵</i></td><td>男<i class="mk">↵</i></td><td>本科<i class="mk">↵</i></td><td>机械<i class="mk">↵</i></td><td>设计人员<i class="mk">↵</i></td><td>工程师<i class="mk">↵</i></td></tr>
</table>
<span class="pm" style="left:1067px;top:586px">↵</span><span class="pm" style="left:1067px;top:641px">↵</span><span class="pm" style="left:1067px;top:696px">↵</span><span class="pm" style="left:1067px;top:751px">↵</span><span class="pm" style="left:1067px;top:806px">↵</span><span class="pm" style="left:1067px;top:860px">↵</span><span class="pm" style="left:379px;top:915px">↵</span>
<div class="a" style="left:608px;top:700px;width:219px;height:56px;border:4px solid #cf1322;box-sizing:border-box"></div>
<svg class="u" style="left:1143px;top:709px" width="15" height="14" viewBox="0 0 15 14"><path d="M1.500 1.500h12v8h-8l-3 3v-3h-1z" fill="#fff" stroke="#4aa564"/><path d="M5 5.500h5M7.500 3v5" stroke="#4aa564"/></svg>

<!-- MIDDLE WINDOW -->
<div class="a" style="left:1243px;top:0;width:2px;height:1002px;background:#8a8a8a"></div>
<div class="a" style="left:1411px;top:13px;width:16px;height:989px;background:#efefef"></div>
<svg class="u" style="left:1414px;top:19px" width="10" height="6"><path d="M1 5l4-4 4 4" fill="none" stroke="#bbb" stroke-width="1.500"/></svg>
<svg class="u" style="left:1414px;top:990px" width="10" height="6"><path d="M1 1l4 4 4-4" fill="none" stroke="#bbb" stroke-width="1.500"/></svg>
<div class="a" style="left:1245px;top:14px;width:166px;height:400px;overflow:hidden;font-size:16px;line-height:22px;color:#111;font-family:'Liberation Sans','Noto Sans CJK SC',sans-serif">
<span class="t" style="left:-14px;top:0;line-height:22px">输油管扶正器谈判采购</span>
<span class="t" style="left:-4px;top:83px;line-height:22px;font-size:16px">CQYT147-</span>
<span class="t" style="left:-14px;top:295px;line-height:22px">的交货地点。</span>
<span class="t" style="left:-14px;top:337px;line-height:22px">文件 。</span>
</div>
<div class="a" style="left:1427px;top:0;width:5px;height:1002px;background:linear-gradient(#0b4a8c 0,#0e548f 35%,#3f7a94 50%,#6b7a6e 58%,#2f7d90 72%,#10567c 88%,#0c3f60 100%)"></div>

<!-- RIGHT WINDOW -->
<div class="a" style="left:1432px;top:0;width:1101px;height:26px;background:#2b579a"></div>
<div class="a" style="left:1493px;top:0;width:49px;height:26px;background:#f3f3f3"></div>
<span class="tb" style="left:1449px;top:2px">文件</span><span class="tb" style="left:1505px;top:2px;color:#2b579a">开始</span><span class="tb" style="left:1556px;top:2px">插入</span><span class="tb" style="left:1607px;top:2px">设计</span><span class="tb" style="left:1657px;top:2px">布局</span><span class="tb" style="left:1708px;top:2px">引用</span><span class="tb" style="left:1760px;top:2px">邮件</span><span class="tb" style="left:1811px;top:2px">审阅</span><span class="tb" style="left:1862px;top:2px">视图</span><span class="tb" style="left:1913px;top:2px">帮助</span><span class="tb" style="left:1964px;top:2px;letter-spacing:.5px">Acrobat</span><span class="tb" style="left:2037px;top:2px;font-size:12.500px">百度网盘</span>
<svg class="u" style="left:2114px;top:0" width="15" height="20"><use href="#bulb"/></svg>
<span class="tb" style="left:2141px;top:2px;font-size:12px">操作说明搜索</span>

<div class="a" style="left:1432px;top:26px;width:1101px;height:95px;background:#f3f3f3"></div>
<div class="a" style="left:1432px;top:120px;width:1101px;height:2px;background:#c6c6c6"></div>
<svg class="u" style="left:1449px;top:34px" width="28" height="30"><use href="#paste"/></svg>
<span class="t" style="left:1449px;top:66px;color:#333">粘贴</span>
<svg class="u" style="left:1458px;top:86px" width="8" height="5"><use href="#chev"/></svg>
<svg class="u" style="left:1485px;top:32px" width="16" height="18"><use href="#scissg"/></svg><span class="t" style="left:1504px;top:33px;color:#aaa">剪切</span>
<svg class="u" style="left:1485px;top:55px" width="15" height="17"><use href="#copyg"/></svg><span class="t" style="left:1504px;top:55px;color:#aaa">复制</span>
<svg class="u" style="left:1485px;top:79px" width="16" height="16"><use href="#paint"/></svg><span class="t" style="left:1504px;top:79px;color:#444">格式刷</span>
<span class="t lbl" style="left:1467px;top:102px">剪贴板</span>
<svg class="u" style="left:1543px;top:109px" width="8" height="8"><use href="#launch"/></svg>
<div class="sep2" style="left:1554px;top:30px"></div>
<div class="inp" style="left:1563px;top:37px;width:107px;height:23px">宋体</div>
<div class="inp" style="left:1672px;top:37px;width:47px;height:23px">四号</div>
<svg class="u" style="left:1659px;top:47px" width="7" height="4" viewBox="0 0 7 4"><path d="M0 0h7L3.500 4z" fill="#777"/></svg>
<svg class="u" style="left:1708px;top:47px" width="7" height="4" viewBox="0 0 7 4"><path d="M0 0h7L3.500 4z" fill="#777"/></svg>
<span class="t lbl" style="left:1706px;top:102px">字体</span>
<svg class="u" style="left:1887px;top:109px" width="8" height="8"><use href="#launch"/></svg>
<div class="sep2" style="left:1899px;top:30px"></div>
<span class="t lbl" style="left:2024px;top:102px">段落</span>
<svg class="u" style="left:2179px;top:109px" width="8" height="8"><use href="#launch"/></svg>
<div class="sep2" style="left:2190px;top:30px;background:#888"></div>
<div class="a" style="left:1563px;top:68px;width:22px;height:23px;background:#c6c6c6;border:1px solid #8a8a8a;box-sizing:border-box"></div>
<div class="a" style="left:1946px;top:37px;width:36px;height:22px;background:#c6c6c6;border:1px solid #8a8a8a;box-sizing:border-box"></div>
<div class="a" style="left:1907px;top:68px;width:22px;height:23px;background:#c6c6c6;border:1px solid #8a8a8a;box-sizing:border-box"></div>
<div class="a" style="left:1476px;top:-37px">
<span class="t" style="left:250px;top:77px;font-size:17px;color:#555">A</span><svg class="u" style="left:259px;top:77px" width="6" height="4" viewBox="0 0 6 4"><path d="M0 4h6L3 0z" fill="#2e75b6"/></svg>
<span class="t" style="left:275px;top:79px;font-size:14px;color:#555">A</span><svg class="u" style="left:283px;top:78px" width="6" height="4" viewBox="0 0 6 4"><path d="M0 0h6L3 4z" fill="#2e75b6"/></svg>
<div class="sep" style="left:296px;top:76px;height:19px"></div>
<span class="t" style="left:303px;top:77px;font-size:15px;color:#555">Aa</span><svg class="u" style="left:323px;top:84px" width="7" height="4"><use href="#chev"/></svg>
<div class="sep" style="left:340px;top:76px;height:19px"></div>
<svg class="u" style="left:348px;top:75px" width="18" height="19"><use href="#erase"/></svg>
<span class="t c" style="left:380px;top:72px;font-size:9px;color:#444;line-height:10px">wén</span><span class="t c" style="left:380px;top:80px;font-size:11px;color:#2e75b6;line-height:12px">文</span>
<div class="a" style="left:396px;top:77px;width:16px;height:16px;border:1px solid #2e75b6;text-align:center;line-height:16px;font-size:14px;color:#555;box-sizing:border-box">A</div>
<span class="t c" style="left:98px;top:108px;font-weight:bold;font-size:13px;color:#555">B</span>
<span class="t c" style="left:121px;top:108px;font-style:italic;font-family:'Liberation Serif';font-size:14px;color:#555">I</span>
<span class="t c" style="left:145px;top:108px;text-decoration:underline;font-size:13px;color:#555">U</span><svg class="u" style="left:160px;top:114px" width="7" height="4"><use href="#chev"/></svg>
<span class="t c" style="left:185px;top:108px;text-decoration:line-through;font-size:12px;color:#555">abc</span>
<span class="t c" style="left:209px;top:108px;font-size:13px;color:#555;font-weight:bold">x<sub style="font-size:7px;color:#2e75b6">2</sub></span>
<span class="t c" style="left:233px;top:108px;font-size:13px;color:#555;font-weight:bold">x<sup style="font-size:7px;color:#2e75b6;line-height:0">2</sup></span>
<div class="sep" style="left:249px;top:106px;height:21px"></div>
<span class="t c" style="left:264px;top:107px;font-size:16px;color:#fff;font-weight:bold;-webkit-text-stroke:1px #2e75b6">A</span><svg class="u" style="left:276px;top:114px" width="7" height="4"><use href="#chev"/></svg>
<span class="t c" style="left:302px;top:104px;font-size:11px;color:#555">ab</span><svg class="u" style="left:304px;top:107px" width="8" height="10" viewBox="0 0 8 10"><path d="M6 0l2 1.500L2 9 0 10l.5-2z" fill="#777"/></svg><div class="a" style="left:294px;top:120px;width:16px;height:4px;background:#ffec00"></div><svg class="u" style="left:316px;top:114px" width="7" height="4"><use href="#chev"/></svg>
<span class="t c" style="left:341px;top:107px;font-size:15px;color:#555">A</span><div class="a" style="left:333px;top:120px;width:16px;height:4px;background:#e00000"></div><svg class="u" style="left:355px;top:114px" width="7" height="4"><use href="#chev"/></svg>
<div class="a" style="left:373px;top:107px;width:14px;height:17px;background:#b5b5b5;text-align:center;line-height:17px;font-size:15px;color:#444">A</div>
<div class="a" style="left:396px;top:108px;width:16px;height:16px;border:1px solid #777;border-radius:50%;text-align:center;line-height:15px;font-size:10px;color:#555;box-sizing:border-box">字</div>
<svg class="u" style="left:434px;top:77px" width="16" height="14"><use href="#bul"/></svg><svg class="u" style="left:456px;top:84px" width="7" height="4"><use href="#chev"/></svg>
<svg class="u" style="left:474px;top:77px" width="16" height="15"><use href="#num"/></svg><svg class="u" style="left:494px;top:84px" width="7" height="4"><use href="#chev"/></svg>
<svg class="u" style="left:514px;top:77px" width="17" height="15"><use href="#mul"/></svg><svg class="u" style="left:532px;top:84px" width="7" height="4"><use href="#chev"/></svg>
<div class="sep" style="left:549px;top:76px;height:19px"></div>
<svg class="u" style="left:557px;top:77px" width="16" height="14"><use href="#dec"/></svg>
<svg class="u" style="left:581px;top:77px" width="16" height="14"><use href="#inc"/></svg>
<div class="sep" style="left:604px;top:76px;height:19px"></div>
<svg class="u" style="left:612px;top:78px" width="17" height="15"><use href="#xa"/></svg><svg class="u" style="left:633px;top:84px" width="7" height="4"><use href="#chev"/></svg>
<div class="sep" style="left:649px;top:76px;height:19px"></div>
<svg class="u" style="left:658px;top:76px" width="16" height="17"><use href="#sort"/></svg>
<div class="sep" style="left:685px;top:76px;height:19px"></div>
<svg class="u" style="left:691px;top:78px" width="13" height="15"><use href="#pil"/></svg>
<svg class="u" style="left:436px;top:110px" width="14" height="12"><use href="#al"/></svg>
<svg class="u" style="left:459px;top:110px" width="14" height="12"><use href="#ac"/></svg>
<svg class="u" style="left:483px;top:110px" width="14" height="12"><use href="#ar"/></svg>
<svg class="u" style="left:507px;top:110px" width="14" height="12"><use href="#aj"/></svg>
<svg class="u" style="left:530px;top:107px" width="16" height="17"><use href="#ad"/></svg>
<div class="sep" style="left:554px;top:106px;height:21px"></div>
<svg class="u" style="left:561px;top:107px" width="16" height="17"><use href="#ls"/></svg><svg class="u" style="left:581px;top:114px" width="7" height="4"><use href="#chev"/></svg>
<div class="sep" style="left:598px;top:106px;height:21px"></div>
<svg class="u" style="left:605px;top:107px" width="18" height="17"><use href="#shade"/></svg><svg class="u" style="left:629px;top:114px" width="7" height="4"><use href="#chev"/></svg>
<svg class="u" style="left:645px;top:109px" width="14" height="14"><use href="#bord"/></svg><svg class="u" style="left:668px;top:114px" width="7" height="4"><use href="#chev"/></svg>
</div>
<!-- styles right -->
<div class="a" style="left:2201px;top:32px;width:340px;height:60px;background:#fff;border:1px solid #c6c6c6;box-sizing:border-box"></div>
<span class="t" style="left:2209px;top:45px;font-family:'Liberation Serif';font-size:11px;color:#111">AaBbCcDdEe</span>
<div class="a" style="left:2281px;top:43px;width:59px;height:20px;overflow:hidden;font-family:'Liberation Serif';font-size:15px;color:#2a6db5;line-height:20px;white-space:nowrap">AaBbCcDdEe</div>
<div class="a" style="left:2353px;top:45px;width:59px;height:18px;overflow:hidden;font-family:'Liberation Serif';font-size:13px;color:#111;line-height:18px;white-space:nowrap">AaBbCcDdEe</div>
<span class="t" style="left:2425px;top:45px;font-family:'Liberation Serif';font-size:11px;color:#111">AaBbCcDdEe</span>
<div class="a" style="left:2497px;top:43px;width:36px;height:20px;overflow:hidden;font-size:14px;color:#2a6db5;line-height:20px;white-space:nowrap">AaBbCc</div>
<svg class="u" style="left:2210px;top:75px" width="7" height="7"><use href="#pmk"/></svg><span class="t" style="left:2220px;top:69px;color:#666;font-size:13px">Body t...</span>
<svg class="u" style="left:2281px;top:75px" width="7" height="7"><use href="#pmk"/></svg><span class="t" style="left:2292px;top:69px;color:#666;font-size:13px">Body t...</span>
<svg class="u" style="left:2357px;top:75px" width="7" height="7"><use href="#pmk"/></svg><span class="t" style="left:2368px;top:69px;color:#666;font-size:13px">Default</span>
<svg class="u" style="left:2428px;top:75px" width="7" height="7"><use href="#pmk"/></svg><span class="t" style="left:2438px;top:69px;color:#666;font-size:13px">Other|1</span>
<span class="t" style="left:2497px;top:69px;color:#666;font-size:13px">表内正</span>
<!-- yellow right -->
<div class="y" style="left:1432px;top:121px;width:1101px;height:31px"></div>
<div class="a" style="left:1441px;top:125px;width:22px;height:22px;border-radius:50%;background:#4b7fb5;color:#fff;text-align:center;line-height:22px;font-weight:bold;font-family:'Liberation Serif';font-size:17px">i</div>
<span class="t" style="left:1472px;top:127px;font-weight:bold;color:#444;font-size:12px">获取正版 OFFICE</span>
<span class="t" style="left:1578px;top:127px;color:#444;font-size:12px">你的许可证并非正版，你可能是盗版软件的受害者。立即通过正版 Office 避免中断并使文件保持安全。</span>
<div class="yb" style="left:2133px;top:124px;width:120px;height:23px">获取正版 Office</div>
<div class="yb" style="left:2263px;top:124px;width:105px;height:23px">了解详细信息</div>
<!-- right body -->
<div class="a" style="left:1432px;top:152px;width:1101px;height:829px;background:#e6e6e6"></div>
<div class="a" style="left:1781px;top:152px;width:1px;height:829px;background:#c0c0c0"></div>
<span class="t" style="left:1447px;top:166px;font-size:20px;line-height:24px;color:#333">导航</span>
<svg class="u" style="left:1711px;top:170px" width="13" height="8"><path d="M.5.500l6 6 6-6" fill="none" stroke="#555"/></svg>
<svg class="u" style="left:1753px;top:169px" width="10" height="10"><path d="M0 0l10 10M10 0L0 10" stroke="#555"/></svg>
<div class="a" style="left:1447px;top:207px;width:316px;height:26px;background:#fff;border:1px solid #b0b0b0;box-sizing:border-box"></div>
<span class="n" style="left:1453px;top:211px;color:#777">在文档中搜索</span>
<svg class="u" style="left:1734px;top:212px" width="14" height="16"><use href="#find"/></svg>
<svg class="u" style="left:1752px;top:218px" width="7" height="4"><use href="#chev"/></svg>
<span class="tabb" style="left:1447px;top:250px;color:#2b579a;font-weight:bold;font-size:12px">标题</span>
<span class="tabb" style="left:1496px;top:250px;font-size:12px">页面</span>
<span class="tabb" style="left:1545px;top:250px;font-size:12px">结果</span>
<div class="a" style="left:1446px;top:273px;width:26px;height:3px;background:#2b579a"></div>
<div class="a" style="left:1515px;top:278px;width:90px;height:6px;overflow:hidden;font-size:12px;color:#444;line-height:16px;white-space:nowrap"><span style="position:relative;top:-10px">2.5.3.3 检验记录</span></div>
<div class="a" style="left:1542px;top:709px;width:208px;height:20px;background:#c2d5f1"></div>
<i class="tri" style="left:1499px;top:295px"></i><span class="tr" style="left:1515px;top:290px">2.5.4 不合格品处置</span>
<span class="tr" style="left:1531px;top:311px">2.5.4.1 原材料不合格品控制程序文件</span>
<span class="tr" style="left:1531px;top:332px">2.5.4.2 原材料不合格品处理记录</span>
<span class="tr" style="left:1531px;top:353px">2.5.4.3 原材料不合格评审报告</span>
<i class="tri" style="left:1483px;top:379px"></i><span class="tr" style="left:1499px;top:374px">2.6 生产过程</span>
<i class="tri" style="left:1499px;top:400px"></i><span class="tr" style="left:1515px;top:395px">2.6.1 管理制度</span>
<span class="tr" style="left:1531px;top:416px">2.6.1.1 加工过程质量管理制度</span>
<span class="tr" style="left:1531px;top:437px">2.6.1.2 加工过程安全管理制度</span>
<span class="tr" style="left:1531px;top:458px">2.6.1.3 质量检验制度</span>
<span class="tr" style="left:1515px;top:479px">2.6.2 制造工艺流程</span>
<span class="tr" style="left:1515px;top:500px">2.6.3 质量检验流程</span>
<i class="tri" style="left:1483px;top:526px"></i><span class="tr" style="left:1499px;top:521px">2.7 研发人员</span>
<i class="tri" style="left:1499px;top:547px"></i><span class="tr" style="left:1515px;top:542px">2.7.1 研发人员名单</span>
<i class="tri" style="left:1515px;top:568px"></i><span class="tr" style="left:1531px;top:563px">2.7.1.1 张春雷</span>
<span class="tr" style="left:1547px;top:584px">2.7.1.1.1 职称证书</span>
<span class="tr" style="left:1547px;top:605px">2.7.1.1.2 劳动合同</span>
<i class="tri" style="left:1515px;top:631px"></i><span class="tr" style="left:1531px;top:626px">2.7.1.2 丁新中</span>
<span class="tr" style="left:1547px;top:647px">2.7.1.2.1 职称证书</span>
<span class="tr" style="left:1547px;top:668px">2.7.1.2.2 劳动合同</span>
<i class="tri" style="left:1515px;top:694px"></i><span class="tr" style="left:1531px;top:689px">2.7.1.3 郭兰燕</span>
<span class="tr" style="left:1547px;top:710px">2.7.1.3.1 职称证书</span>
<span class="tr" style="left:1547px;top:731px">2.7.1.3.2 劳动合同</span>
<i class="tri" style="left:1515px;top:757px"></i><span class="tr" style="left:1531px;top:752px">2.7.1.4 郭峰</span>
<span class="tr" style="left:1547px;top:773px">2.7.1.4.1 职称证书</span>
<span class="tr" style="left:1547px;top:794px">2.7.1.4.2 劳动合同</span>
<i class="tri" style="left:1515px;top:820px"></i><span class="tr" style="left:1531px;top:815px">2.7.1.5 许莉</span>
<span class="tr" style="left:1547px;top:836px">2.7.1.5.1 职称证书</span>
<span class="tr" style="left:1547px;top:857px">2.7.1.5.2 劳动合同</span>
<i class="tri" style="left:1515px;top:883px"></i><span class="tr" style="left:1531px;top:878px">2.7.1.6 徐善荣</span>
<span class="tr" style="left:1547px;top:899px">2.7.1.6.1 职称证书</span>
<span class="tr" style="left:1547px;top:920px">2.7.1.6.2 劳动合同</span>
<span class="tr" style="left:1531px;top:941px">2.7.1.7 社保缴纳证明</span>

<!-- right ruler -->
<div class="a" style="left:1785px;top:154px;width:27px;height:23px;background:#d8d8d8"></div>
<div class="a" style="left:1787px;top:156px;width:23px;height:19px;background:#fff"></div>
<svg class="u" style="left:1795px;top:161px" width="7" height="7"><path d="M1 0v6h6" fill="none" stroke="#444" stroke-width="1.500"/></svg>
<div class="a" style="left:1871px;top:156px;width:662px;height:16px;background:#fff"></div>
<div class="a" style="left:1871px;top:156px;width:82px;height:16px;background:#c6c6c6"></div>
<div class="a" style="left:2482px;top:156px;width:51px;height:16px;background:#c6c6c6"></div>
<span class="rr" style="left:1880px">6</span><span class="rr" style="left:1904px">4</span><span class="rr" style="left:1929px">2</span><span class="rr" style="left:1978px">2</span><span class="rr" style="left:2002px">4</span><span class="rr" style="left:2027px">6</span><span class="rr" style="left:2051px">8</span><span class="rr" style="left:2076px">10</span><span class="rr" style="left:2100px">12</span><span class="rr" style="left:2125px">14</span><span class="rr" style="left:2149px">16</span><span class="rr" style="left:2174px">18</span><span class="rr" style="left:2198px">20</span><span class="rr" style="left:2223px">22</span><span class="rr" style="left:2247px">24</span><span class="rr" style="left:2272px">26</span><span class="rr" style="left:2296px">28</span><span class="rr" style="left:2321px">30</span><span class="rr" style="left:2345px">32</span><span class="rr" style="left:2370px">34</span><span class="rr" style="left:2394px">36</span><span class="rr" style="left:2419px">38</span><span class="rr" style="left:2443px">40</span><span class="rr" style="left:2468px">42</span><span class="rr" style="left:2492px">44</span><span class="rr" style="left:2517px">46</span>
<svg class="u" style="left:1947px;top:153px" width="12" height="12"><path d="M.5.500h10v5l-5 5-5-5z" fill="#fff" stroke="#8a8a8a"/></svg>
<svg class="u" style="left:2015px;top:165px" width="11" height="17"><path d="M5.500.5l5 5v3h-10v-3zM.5 8.500h10v8h-10z" fill="#fff" stroke="#8a8a8a"/></svg>
<svg class="u" style="left:2477px;top:165px" width="11" height="10"><path d="M5.500.5l5 5v3h-10v-3z" fill="#fff" stroke="#8a8a8a"/></svg>
<!-- right vertical ruler -->
<div class="a" style="left:1787px;top:181px;width:17px;height:745px;background:#fff"></div>
<div class="a" style="left:1787px;top:926px;width:17px;height:55px;background:#c6c6c6"></div>
<div class="a" style="left:1792px;top:193px;width:6px;height:788px;background:repeating-linear-gradient(to bottom,#555 0,#555 1px,transparent 1px,transparent 18.300px)"></div>
<span class="vn" style="left:1787px;top:178px;background:#fff;height:10px;line-height:10px">4</span><span class="vn" style="left:1787px;top:215px;background:#fff;height:10px;line-height:10px">6</span><span class="vn" style="left:1787px;top:251px;background:#fff;height:10px;line-height:10px">8</span><span class="vn" style="left:1787px;top:288px;background:#fff;height:10px;line-height:10px">10</span><span class="vn" style="left:1787px;top:325px;background:#fff;height:10px;line-height:10px">12</span><span class="vn" style="left:1787px;top:361px;background:#fff;height:10px;line-height:10px">14</span><span class="vn" style="left:1787px;top:398px;background:#fff;height:10px;line-height:10px">16</span><span class="vn" style="left:1787px;top:434px;background:#fff;height:10px;line-height:10px">18</span><span class="vn" style="left:1787px;top:471px;background:#fff;height:10px;line-height:10px">20</span><span class="vn" style="left:1787px;top:508px;background:#fff;height:10px;line-height:10px">22</span><span class="vn" style="left:1787px;top:544px;background:#fff;height:10px;line-height:10px">24</span><span class="vn" style="left:1787px;top:581px;background:#fff;height:10px;line-height:10px">26</span><span class="vn" style="left:1787px;top:617px;background:#fff;height:10px;line-height:10px">28</span><span class="vn" style="left:1787px;top:654px;background:#fff;height:10px;line-height:10px">30</span><span class="vn" style="left:1787px;top:691px;background:#fff;height:10px;line-height:10px">32</span><span class="vn" style="left:1787px;top:727px;background:#fff;height:10px;line-height:10px">34</span><span class="vn" style="left:1787px;top:764px;background:#fff;height:10px;line-height:10px">36</span><span class="vn" style="left:1787px;top:800px;background:#fff;height:10px;line-height:10px">38</span><span class="vn" style="left:1787px;top:837px;background:#fff;height:10px;line-height:10px">40</span><span class="vn" style="left:1787px;top:874px;background:#fff;height:10px;line-height:10px">42</span><span class="vn" style="left:1787px;top:910px;background:#fff;height:10px;line-height:10px">44</span><span class="vn" style="left:1787px;top:947px;background:#c6c6c6;height:10px;line-height:10px">46</span>

<!-- right page -->
<div class="a" style="left:1872px;top:181px;width:661px;height:800px;background:#fff;border-left:1px solid #c8c8c8;box-sizing:border-box"></div>
<svg class="u" style="left:1955px;top:181px" width="529" height="372" viewBox="1955 181 529 372">
<path d="M1955 181h522q7 0 7 7v350q0 15-15 15H1975q-20 0-20-12z" fill="#ebf2f0"/>
<path d="M1955 541q2 9 18 9l496 1q12 0 15-12" fill="none" stroke="#555" stroke-width="1.500"/>
<path d="M2219 181v370" stroke="#c9d2d0" stroke-dasharray="10 6"/>
<circle cx="2084" cy="298" r="58" fill="none" stroke="#dde3e2" stroke-width="14"/>
<circle cx="2084" cy="296" r="28" fill="none" stroke="#d8dfde" stroke-width="8"/>
<g font-family="Noto Serif CJK SC,serif" fill="#dde6e4" font-size="22"><text x="2005" y="460" letter-spacing="4">职业技能证书</text><text x="2315" y="262" letter-spacing="3">持证须知</text></g>
<g font-family="Noto Sans CJK SC,sans-serif" fill="#e0e8e6" font-size="11" letter-spacing="2"><text x="2268" y="305">持证人应当妥善保管本证书</text><text x="2268" y="335">不得涂改转让或者出借他人</text><text x="2268" y="365">本证书由发证机构统一编号</text><text x="2268" y="395">证书信息可通过网站查询</text><text x="2268" y="510">查询电话及网址请见封底</text></g>
<use href="#ros" x="2086" y="208"/><use href="#ros" x="2352" y="211"/>
<g font-family="Noto Serif CJK SC,serif" fill="#444" font-weight="600">
<text x="2000" y="250" font-size="12">持证人参加:</text>
<text x="2024" y="278" font-size="13" font-weight="700">高级新材料检测工程师</text>
<text x="1997" y="312" font-size="12" letter-spacing=".5">职业技术培训，完成培训计划所</text>
<text x="1997" y="343" font-size="12" letter-spacing=".5">规定的内容，经考核，达到相关</text>
<text x="1997" y="373" font-size="12" letter-spacing=".5">岗位培训标准的技术技能水平。</text>
<text x="2021" y="403" font-size="11" letter-spacing=".3">特发此证。</text>
<text x="2267" y="411" font-size="12">姓</text><text x="2303" y="411" font-size="12">名:</text>
<text x="2362" y="408" font-size="13">郭兰燕</text>
<text x="2267" y="446" font-size="12" letter-spacing="1">身份证号:</text>
<text x="2328" y="445" font-size="11" textLength="104" font-weight="400" font-family="Liberation Serif,serif">320911198607285321</text>
<text x="2267" y="482" font-size="12" letter-spacing="1">证书号码:</text>
<text x="2328" y="481" font-size="11" textLength="104" font-weight="400" font-family="Liberation Serif,serif">125181930145001708</text>
</g>
<path d="M2325 414h108M2325 449h108M2325 485h108" stroke="#666"/>
<g>
<rect x="2312" y="253" width="85" height="98" fill="#eef4f2"/>
<path d="M2312 351V340q4-12 14-18l60-2q8 8 11 20v11z" fill="#a8815f"/>
<path d="M2338 328q16 10 34-2l-2 7q-15 7-30 0z" fill="#7d3c28"/>
<path d="M2356 253c-18 0-27 14-28 34-1 20-8 35-12 48-2 8 0 14 2 16h18l2-27 36 0 4 27h16c2-6 0-14-2-22-4-12-9-26-10-42-1-20-8-34-26-34z" fill="#161720"/>
<ellipse cx="2354" cy="296" rx="18" ry="26" fill="#eadad0"/>
<rect x="2345" y="314" width="18" height="15" fill="#e0cbbd"/>
<path d="M2341 287h9M2358 287h9" stroke="#333" stroke-width="2.500"/><path d="M2349 309h9" stroke="#a5443d" stroke-width="2"/>
<path d="M2336 268q18-14 36 0 3 10 0 16-10-14-18-16-6 6-17 16-3-8-1-16z" fill="#161720"/>
</g>
<g fill="none" stroke="#d95462"><ellipse cx="2115" cy="455" rx="58" ry="60" stroke-width="2.500"/></g>
<path d="M2114 437l5.500 12.500 13 1-10 9 3.500 13.500-12-7.500-12 7.500 3.500-13.500-10-9 13-1z" fill="#d95462"/>
<path id="sa" d="M2077 491A50 50 0 1 1 2155 486" fill="none"/>
<path id="sb" d="M2073 490A54 54 0 0 0 2158 487" fill="none"/>
<text font-family="Noto Sans CJK SC,sans-serif" font-size="15" fill="#d95462"><textPath href="#sa" textLength="225">工业和信息化部教育与考试中心</textPath></text>
<text font-family="Liberation Sans,sans-serif" font-size="8" font-weight="bold" fill="#d95462" letter-spacing="1"><textPath href="#sb">1100000271686</textPath></text>
<text x="2053" y="488" font-family="Noto Serif CJK SC,serif" font-size="12" font-weight="600" fill="#3b3b3b">2025 年 1 月 6 日</text>
</svg>
<div class="a" style="left:2010px;top:254px;width:178px;height:29px;border:3.500px solid #cf1322;box-sizing:border-box"></div>
<span class="pm" style="left:2485px;top:539px">↵</span>
<span class="pm" style="left:2121px;top:560px">↵</span>
<div class="crop" style="left:1933px;top:927px;width:21px;height:1px"></div><div class="crop" style="left:1954px;top:927px;width:1px;height:21px"></div>
<div class="crop" style="left:2460px;top:927px;width:21px;height:1px"></div><div class="crop" style="left:2460px;top:927px;width:1px;height:21px"></div>
<span class="t" style="left:2205px;top:935px;font-size:11px;color:#666">245<i class="mk">↵</i></span>

<!-- status bar -->
<div class="a" style="left:1432px;top:980px;width:1101px;height:22px;background:#f1f1f1;border-top:2px solid #c6c6c6;box-sizing:border-box"></div>
<span class="st" style="left:1444px;letter-spacing:.7px">第 245 页，共 309 页</span>
<span class="st" style="left:1581px">8469 个字</span>
<svg class="u" style="left:1656px;top:984px" width="14" height="14" viewBox="0 0 14 14"><path d="M6 1H1v12h5V1zM8 3l4 4M12 3L8 7" fill="none" stroke="#555"/></svg>
<span class="st" style="left:1688px">简体中文(中国大陆)</span>
<span class="st" style="left:1811px">修订: 关闭</span>
<svg class="u" style="left:1887px;top:984px" width="14" height="14" viewBox="0 0 14 14"><circle cx="7" cy="7" r="5" fill="none" stroke="#555"/><path d="M4 3l7 8M11 3l-7 8" stroke="#333"/></svg>
<span class="st" style="left:1904px;font-weight:bold;font-size:11.500px">辅助功能: 调查</span>

<!-- TASKBAR -->
<div class="a" style="left:0;top:1002px;width:2533px;height:32px;background:linear-gradient(90deg,#3a3e3e 0,#454847 40%,#3f4343 52%,#2a353a 60%,#2b383f 100%)"></div>
<div class="a" style="left:100px;top:1002px;width:48px;height:32px;background:#666a69"></div>
<div class="a" style="left:1628px;top:1002px;width:48px;height:32px;background:#a5652f"></div>
<div class="a" style="left:2020px;top:1002px;width:48px;height:32px;background:#555c5f"></div>
<svg class="ti" style="left:14px;top:1010px" width="22" height="22"><use href="#acr"/></svg>
<svg class="ti" style="left:63px;top:1010px" width="24" height="24"><use href="#ch"/></svg>
<svg class="ti" style="left:113px;top:1010px" width="22" height="24"><use href="#jj"/></svg>
<svg class="ti" style="left:160px;top:1010px" width="24" height="24"><use href="#xin"/></svg>
<svg class="ti" style="left:210px;top:1010px" width="24" height="24"><use href="#bd"/></svg>
<svg class="ti" style="left:258px;top:1010px" width="24" height="24"><use href="#bu"/></svg>
<svg class="ti" style="left:308px;top:1009px" width="24" height="25"><use href="#ni"/></svg>
<svg class="ti" style="left:357px;top:1010px" width="24" height="24"><use href="#wd"/></svg>
<svg class="ti" style="left:406px;top:1010px" width="22" height="24"><use href="#ss"/></svg>
<svg class="ti" style="left:456px;top:1011px" width="22" height="23"><use href="#fold"/></svg>
<svg class="ti" style="left:1328px;top:1010px" width="14" height="22" viewBox="0 0 14 22"><path d="M11 1c-3 0-5 7-7 13-1 4-3 5-2 6s4-3 6-8c1-3 3-6 4-9M2 14c3-2 8-3 11-2" fill="none" stroke="#eee"/></svg>
<span class="t c" style="left:1391px;top:1005px;color:#fff;font-size:12px">11:01</span>
<span class="t c" style="left:1392px;top:1022px;color:#fff;font-size:12px">2025-08-19</span>
<svg class="ti" style="left:1448px;top:1015px" width="16" height="15" viewBox="0 0 16 15"><path d="M0 2l7-1v6H0zM8 1l8-1v7H8zM0 8h7v6l-7-1zM8 8h8v7l-8-1z" fill="#fff"/></svg>
<svg class="ti" style="left:1493px;top:1009px" width="22" height="25" viewBox="0 0 22 25"><circle cx="13" cy="10" r="7.500" fill="none" stroke="#fff" stroke-width="2"/><path d="M8 16l-7 8" stroke="#fff" stroke-width="2"/></svg>
<svg class="ti" style="left:1544px;top:1014px" width="16" height="17" viewBox="0 0 16 17"><path d="M.5 4.500h11v8H.5zM1 1h10M1 16h10M14.500 1v3M14.500 7v3M14.500 13v3" fill="none" stroke="#fff" stroke-width="1.300"/></svg>
<div class="a" style="left:1593px;top:1012px;width:20px;height:20px;border-radius:3px;background:#001e36;color:#31a8ff;font-weight:bold;font-size:12px;text-align:center;line-height:20px">Ps</div>
<svg class="ti" style="left:1640px;top:1009px" width="24" height="25" viewBox="0 0 24 25"><circle cx="11" cy="11" r="8.500" fill="none" stroke="#2f8fe8" stroke-width="3"/><path d="M5 18l-2 5 6-3" fill="#2f8fe8"/><path d="M15 16l4-4 4 4-4 4z" fill="#e8842b"/><circle cx="15" cy="21" r="2.500" fill="#4caf50"/></svg>
<svg class="ti" style="left:1689px;top:1011px" width="24" height="23" viewBox="0 0 24 23"><path d="M6 0h18v23H6z" fill="#21a366"/><path d="M15 0h9v7h-9z" fill="#33c481"/><path d="M15 15h9v8h-9z" fill="#107c41"/><rect x="0" y="5" width="13" height="13" fill="#107c41"/><text x="3" y="15.500" font-size="10" font-weight="bold" fill="#fff" font-family="Liberation Sans">X</text></svg>
<svg class="ti" style="left:1738px;top:1011px" width="24" height="23" viewBox="0 0 24 23"><rect width="24" height="23" rx="5" fill="#17c653"/><ellipse cx="10" cy="10" rx="7" ry="6" fill="#fff"/><ellipse cx="16" cy="14" rx="5.500" ry="4.500" fill="#fff" stroke="#17c653"/></svg>
<svg class="ti" style="left:1787px;top:1010px" width="24" height="24" viewBox="0 0 24 24"><circle cx="11" cy="11" r="8" fill="none" stroke="#2f8fe8" stroke-width="4"/><ellipse cx="12" cy="21" rx="9" ry="3" fill="#fff"/></svg>
<svg class="ti" style="left:1838px;top:1011px" width="20" height="23" viewBox="0 0 20 23"><path d="M8 1l10 2-5 20-11-3z" fill="#cfe6ea"/><path d="M8 1L2 20l3 1 6-19z" fill="#8ab4bb"/></svg>
<svg class="ti" style="left:1888px;top:1010px" width="18" height="24" viewBox="0 0 18 24"><rect width="18" height="24" fill="#7d8a8f"/><rect x="2" y="2" width="14" height="5" fill="#4fb7e0"/><g fill="#dfe6e8"><rect x="2" y="9" width="4" height="3"/><rect x="7" y="9" width="4" height="3"/><rect x="12" y="9" width="4" height="3"/><rect x="2" y="14" width="4" height="3"/><rect x="7" y="14" width="4" height="3"/><rect x="12" y="14" width="4" height="3"/><rect x="2" y="19" width="4" height="3"/><rect x="7" y="19" width="4" height="3"/><rect x="12" y="19" width="4" height="3"/></g></svg>
<svg class="ti" style="left:1935px;top:1010px" width="22" height="22"><use href="#acr"/></svg>
<svg class="ti" style="left:1983px;top:1010px" width="24" height="24"><use href="#ch"/></svg>
<svg class="ti" style="left:2033px;top:1010px" width="22" height="24"><use href="#jj"/></svg>
<svg class="ti" style="left:2082px;top:1010px" width="24" height="24"><use href="#xin"/></svg>
<svg class="ti" style="left:2130px;top:1010px" width="24" height="24"><use href="#bd"/></svg>
<svg class="ti" style="left:2179px;top:1010px" width="24" height="24"><use href="#bu"/></svg>
<svg class="ti" style="left:2227px;top:1009px" width="24" height="25"><use href="#ni"/></svg>
<svg class="ti" style="left:2277px;top:1010px" width="24" height="24"><use href="#wd"/></svg>
<svg class="ti" style="left:2327px;top:1010px" width="22" height="24"><use href="#ss"/></svg>
<svg class="ti" style="left:2376px;top:1011px" width="22" height="23"><use href="#fold"/></svg>
</body></html>
